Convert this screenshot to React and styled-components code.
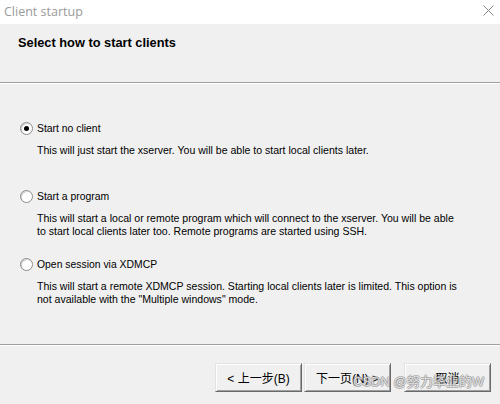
import styled, { createGlobalStyle } from 'styled-components'

const GlobalStyle = createGlobalStyle`
  html, body {
    margin: 0;
    padding: 0;
    background: #f0f0f0;
  }
  * {
    box-sizing: border-box;
  }
`

const Window = styled.div`
  position: relative;
  width: 500px;
  height: 404px;
  display: flex;
  flex-direction: column;
  background: #f0f0f0;
  font-family: 'Liberation Sans', Arial, sans-serif;
  color: #000;
  overflow: hidden;
`

const TitleBar = styled.div`
  height: 24px;
  background: #fff;
  display: flex;
  align-items: center;
  justify-content: space-between;
  padding: 0 6px 2px 4px;
`

const Caption = styled.span`
  font-family: 'Open Sans', 'Noto Sans', sans-serif;
  font-size: 12.5px;
  color: #9a9a9a;
`

const CloseIcon = styled.svg`
  width: 11px;
  height: 11px;
  margin-bottom: 1px;
`

const Header = styled.div`
  height: 58px;
  padding: 12px 0 0 18px;
`

const Heading = styled.h1`
  margin: 0;
  font-size: 12.8px;
  font-weight: bold;
  line-height: 14px;
`

const Rule = styled.div`
  height: 2px;
  border-top: 1px solid #a0a0a0;
  border-bottom: 1px solid #fff;
`

const Body = styled.div`
  flex: 1;
  padding: 37px 0 0 20px;
`

const Option = styled.div`
  height: 68px;
`

const Choice = styled.label`
  display: flex;
  align-items: center;
  gap: 4px;
  height: 14px;
  font-size: 10.4px;
`

const Radio = styled.span`
  width: 13px;
  height: 13px;
  border-radius: 50%;
  border: 1px solid #8c8c8c;
  background: #fff;
  box-shadow: inset 1px 1px 0 #d2d2d2;
  display: flex;
  align-items: center;
  justify-content: center;

  &::after {
    content: '';
    width: 5px;
    height: 5px;
    border-radius: 50%;
    background: ${props => (props.checked ? '#000' : 'transparent')};
  }
`

const Desc = styled.p`
  margin: 9px 0 0 17px;
  font-size: 10.55px;
  line-height: 13px;
`

const Footer = styled.div`
  height: 58px;
  display: flex;
  justify-content: flex-end;
  align-items: flex-start;
  padding: 17px 9px 0 0;
`

const Button = styled.button`
  width: 87px;
  height: 29px;
  margin-left: ${props => props.gap || 0}px;
  background: #f0f0f0;
  border: 1px solid;
  border-color: #e3e3e3 #696969 #696969 #e3e3e3;
  box-shadow: inset 1px 1px 0 #fff, inset -1px -1px 0 #a0a0a0;
  font-family: 'Liberation Sans', 'Noto Sans CJK SC', sans-serif;
  font-size: 12px;
  color: #000;
  padding: 0;
`

const Watermark = styled.div`
  position: absolute;
  left: 353px;
  top: 371px;
  font-family: 'Liberation Sans', 'Noto Sans CJK SC', sans-serif;
  font-size: 13px;
  color: rgba(255, 255, 255, 0.7);
  text-shadow:
    1px 0 0 rgba(120, 120, 120, 0.5),
    -1px 0 0 rgba(120, 120, 120, 0.5),
    0 1px 0 rgba(120, 120, 120, 0.5),
    0 -1px 0 rgba(120, 120, 120, 0.5);
  pointer-events: none;
  white-space: nowrap;
`

const options = [
  {
    label: 'Start no client',
    checked: true,
    lines: ['This will just start the xserver. You will be able to start local clients later.']
  },
  {
    label: 'Start a program',
    lines: [
      'This will start a local or remote program which will connect to the xserver. You will be able',
      'to start local clients later too. Remote programs are started using SSH.'
    ]
  },
  {
    label: 'Open session via XDMCP',
    lines: [
      'This will start a remote XDMCP session. Starting local clients later is limited. This option is',
      'not available with the "Multiple windows" mode.'
    ]
  }
]

const App = () => {
  return (
    <Window>
      <GlobalStyle />
      <TitleBar>
        <Caption>Client startup</Caption>
        <CloseIcon viewBox="0 0 11 11">
          <path d="M0.5 0.5 L10.5 10.5 M10.5 0.5 L0.5 10.5" stroke="#8a8a8a" strokeWidth="1" />
        </CloseIcon>
      </TitleBar>
      <Header>
        <Heading>Select how to start clients</Heading>
      </Header>
      <Rule />
      <Body>
        {options.map(opt => (
          <Option key={opt.label}>
            <Choice>
              <Radio checked={opt.checked} />
              {opt.label}
            </Choice>
            <Desc>
              {opt.lines.map((line, i) => (
                <span key={i}>
                  {line}
                  {i < opt.lines.length - 1 && <br />}
                </span>
              ))}
            </Desc>
          </Option>
        ))}
      </Body>
      <Rule />
      <Footer>
        <Button>&lt; 上一步(B)</Button>
        <Button gap={2}>下一页(N) &gt;</Button>
        <Button gap={13}>取消</Button>
      </Footer>
      <Watermark>CSDN @努力毕业的W</Watermark>
    </Window>
  )
}

export default App
